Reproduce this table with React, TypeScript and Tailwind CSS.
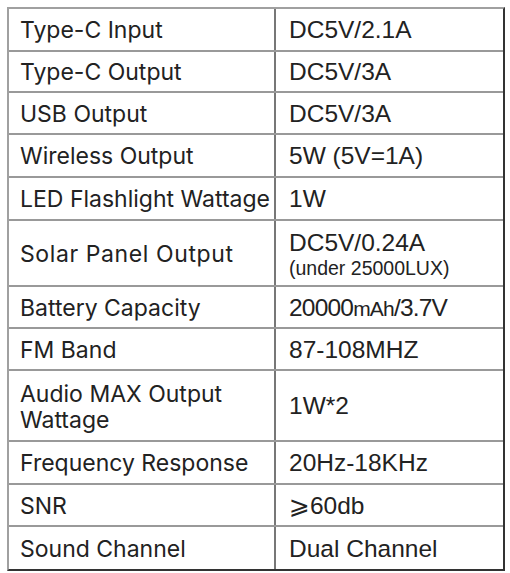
const rows: { label: React.ReactNode; value: React.ReactNode; h: string }[] = [
  { label: "Type-C Input", value: "DC5V/2.1A", h: "h-[43px]" },
  { label: "Type-C Output", value: "DC5V/3A", h: "h-[41px]" },
  { label: "USB Output", value: "DC5V/3A", h: "h-[42px]" },
  { label: "Wireless Output", value: "5W (5V=1A)", h: "h-[43px]" },
  { label: "LED Flashlight Wattage", value: "1W", h: "h-[43px]" },
  {
    label: <span className="tracking-[0.6px]">Solar Panel Output</span>,
    value: (
      <div className="flex flex-col">
        <span className="leading-[28px]">DC5V/0.24A</span>
        <span className="text-[19.5px] leading-[22px]">(under 25000LUX)</span>
      </div>
    ),
    h: "h-[66px]",
  },
  {
    label: "Battery Capacity",
    value: (
      <span className="tracking-[-0.8px]">
        20000<span className="text-[21px]">mAh</span>/3.7V
      </span>
    ),
    h: "h-[42px]",
  },
  { label: "FM Band", value: "87-108MHZ", h: "h-[42px]" },
  {
    label: (
      <span className="leading-[26px] block">
        Audio MAX Output
        <br />
        Wattage
      </span>
    ),
    value: "1W*2",
    h: "h-[71px]",
  },
  { label: "Frequency Response", value: "20Hz-18KHz", h: "h-[43px]" },
  {
    label: "SNR",
    value: (
      <span>
        <span className="font-['DejaVu_Sans',sans-serif] text-[25px]">⩾</span>60db
      </span>
    ),
    h: "h-[42px]",
  },
  { label: "Sound Channel", value: "Dual Channel", h: "h-[42px]" },
];

export default function App() {
  return (
    <div className="w-[510px] h-[573px] bg-white pt-[7px] pl-[7px]">
      <div className="w-[498px] border-t-2 border-l-2 border-t-[#a0a0a0] border-l-[#a0a0a0] border-r-2 border-r-[#333] border-b-2 border-b-[#333] text-[#222]">
        {rows.map((r, i) => (
          <div
            key={i}
            className={`flex ${r.h} ${i < rows.length - 1 ? "border-b-2 border-[#999]" : ""}`}
          >
            <div className="w-[267px] flex items-center pl-[11px] pt-[2px] border-r-2 border-[#777] font-['Inter',sans-serif] text-[23px] leading-none">
              {r.label}
            </div>
            <div className="flex-1 flex items-center pl-[13px] pt-[2px] font-['Liberation_Sans',sans-serif] text-[24.5px] leading-none">
              {r.value}
            </div>
          </div>
        ))}
      </div>
    </div>
  );
}
